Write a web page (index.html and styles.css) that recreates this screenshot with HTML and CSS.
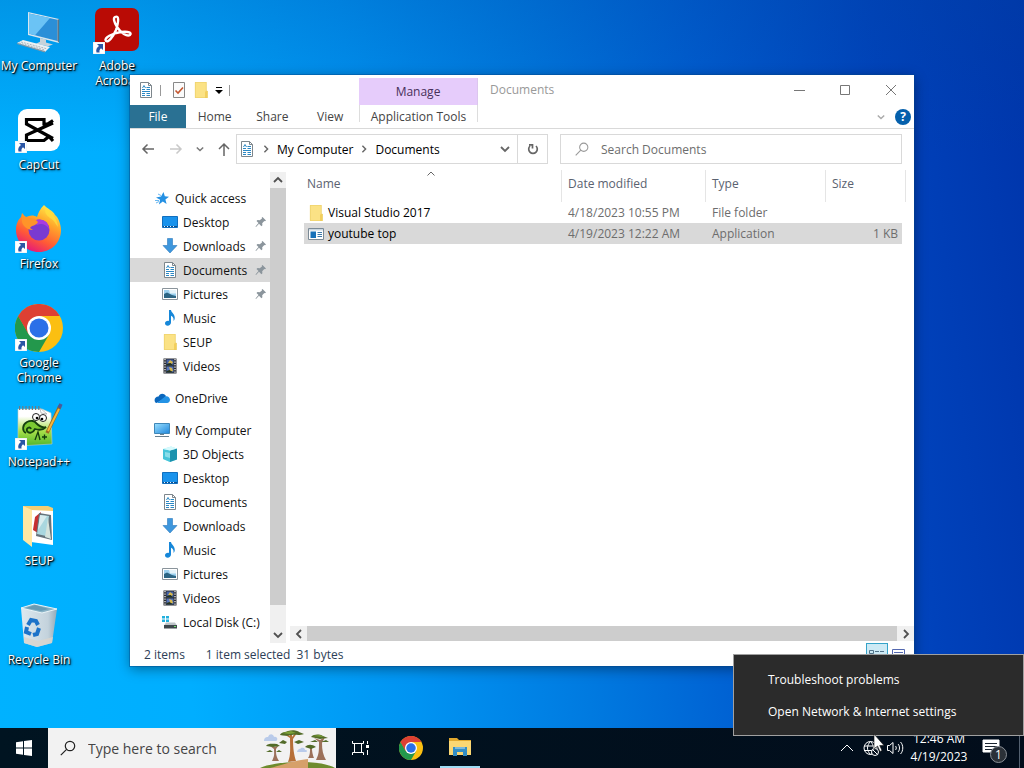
FILE: index.html
```html
<!DOCTYPE html>
<html lang="en">
<head>
    <meta charset="UTF-8">
    <meta name="viewport" content="width=device-width, initial-scale=1.0">
    <title>Documents</title>
    <link rel="stylesheet" href="styles.css">
</head>
<body>
    <!-- shared icons -->
    <svg class="sprite" aria-hidden="true">
        <defs>
            <linearGradient id="screenGrad" x1="0" y1="0" x2="1" y2="1">
                <stop offset="0" stop-color="#9be0ff"/>
                <stop offset="1" stop-color="#1e86dc"/>
            </linearGradient>
            <linearGradient id="foxGrad" x1="0.8" y1="0" x2="0.3" y2="1">
                <stop offset="0" stop-color="#fff44f"/>
                <stop offset="0.35" stop-color="#ffa72a"/>
                <stop offset="0.7" stop-color="#ff5a36"/>
                <stop offset="1" stop-color="#e3147f"/>
            </linearGradient>
            <linearGradient id="noteGrad" x1="0" y1="0" x2="0" y2="1">
                <stop offset="0.2" stop-color="#ffffff"/>
                <stop offset="0.6" stop-color="#a7e04a"/>
                <stop offset="1" stop-color="#4fb52c"/>
            </linearGradient>
            <linearGradient id="binGrad" x1="0" y1="0" x2="1" y2="0">
                <stop offset="0" stop-color="#dfe9ef"/>
                <stop offset="0.75" stop-color="#c3d2dc"/>
                <stop offset="1" stop-color="#93aab8"/>
            </linearGradient>
        </defs>
        <symbol id="i-shortcut" viewBox="0 0 12 12">
            <path fill="#fff" stroke="#c8d4e0" stroke-width="0.5" d="M0 0h12v12H0z"/>
            <path fill="#2a56a5" d="M4 2h6v6L8 6.300C6.500 7.500 6.200 9 6.600 10.500H3.500C2.600 7.800 3.800 5.300 6 4z"/>
        </symbol>
        <symbol id="i-chrome" viewBox="0 0 48 48">
            <circle cx="24" cy="24" r="24" fill="#fbbf12"/>
            <path fill="#dd4033" d="M3.200 12A24 24 0 0 1 44.800 12H24L13.600 30z"/>
            <path fill="#23984c" d="M3.200 12A24 24 0 0 0 24 48L34.400 30 24 36 13.600 30z"/>
            <path fill="#dd4033" d="M3.200 12L13.600 30 24 12z"/>
            <circle cx="24" cy="24" r="12" fill="#fff"/>
            <circle cx="24" cy="24" r="9.500" fill="#2b70e8"/>
        </symbol>
        <symbol id="i-doc" viewBox="0 0 16 16">
            <path fill="#fff" stroke="#7d868c" d="M2.500.5h8l3 3v12h-11z"/>
            <path fill="none" stroke="#7d868c" d="M10.500.5v3h3"/>
            <path stroke="#2b88c4" d="M4 7.500h3M8.500 5.500H12M8.500 7.500H12M4 9.500h8M4 11.500h3M8.500 11.500H12M4 13.500h3M8.500 13.500H12"/>
            <path stroke="#2b88c4" fill="none" d="M4.500 6L6 3.500 7.500 6"/>
        </symbol>
        <symbol id="i-folder" viewBox="0 0 16 16">
            <path fill="#fbe285" d="M2 0h9.500v9h3V16H2z"/>
            <path fill="#fbe285" d="M11 0h2.500v10H11z"/>
            <path fill="#f3cf5c" d="M12 9.500L14.500 9v7H12z"/>
            <path fill="none" stroke="#e8c95f" stroke-width="0.6" d="M2.300.3h11V9h1v6.700H2.300z"/>
        </symbol>
        <symbol id="i-star" viewBox="0 0 16 16">
            <path fill="#2490e3" d="M9.500 2l1.300 4.300 4.200.4-3.600 2.700 1.200 4.600-3.800-2.400-3.900 2.800 1.200-4.600L2 7.500l5-1z"/>
            <path stroke="#6ab8f1" d="M1 10.500h4M2 13l3-1.500M4 4l3 1.500"/>
        </symbol>
        <symbol id="i-desktop" viewBox="0 0 16 16">
            <path fill="#1a93ec" stroke="#116fbf" d="M.5 2.500h15v11H.5z"/>
            <path stroke="#0c4f8f" d="M1 12.500h14"/>
            <path stroke="#e8f5ff" stroke-dasharray="1 2" d="M2 12.500h12"/>
        </symbol>
        <symbol id="i-down" viewBox="0 0 16 16">
            <path fill="#3e97dd" stroke="#2a79be" stroke-width="0.6" d="M5.500.5h5v7H15L8 15 1 7.500h4.500z"/>
        </symbol>
        <symbol id="i-picture" viewBox="0 0 16 16">
            <path fill="#fff" stroke="#8a949b" d="M.5 2.500h15v11H.5z"/>
            <path fill="#9bd0ef" d="M2 4h12v8H2z"/>
            <path fill="#e4f3fa" d="M7 4h7v3.500H8z"/>
            <path fill="#2c6584" d="M2 12V8l3-1.500 5 2.500 4 1v2z"/>
        </symbol>
        <symbol id="i-music" viewBox="0 0 16 16">
            <path fill="#1687d9" d="M7 0h2c.3 3 4.500 4 3.700 9-.4 1-.8 1.500-1.200 1.900C12 7.500 10.500 6.500 9 5.700V12.500c0 2-1.600 3.200-3.300 3.200S3 14.700 3 13.300c0-1.700 1.900-2.900 4-2.400z"/>
        </symbol>
        <symbol id="i-video" viewBox="0 0 16 16">
            <path fill="#2b2d33" d="M1.500 0.500h13v15h-13z"/>
            <path stroke="#fff" stroke-width="1.200" stroke-dasharray="1.200 1.300" d="M3 1v14M13 1v14"/>
            <path fill="#4563a8" d="M4.500 1.500h7v6h-7z"/>
            <path fill="#5574ba" d="M4.500 8.500h7v6h-7z"/>
            <path fill="#d7b84e" d="M8 2l3 2-1 2-4-1zM7 9l3 1 1 3-4 1-1-1 2-1z"/>
            <path fill="#243322" d="M4.500 6l4-1 3 2.500h-7zM4.500 13l3-1 4 2.500h-7z"/>
        </symbol>
        <symbol id="i-cloud" viewBox="0 0 16 16">
            <path fill="#0b67bd" d="M4.500 6.500C5.500 3.500 9.500 2.200 12 6c-1 3-6 5-9.500 7C-.5 12 0 6.500 4.500 6.500z"/>
            <path fill="#2493e5" d="M3 13l8.500-6.800c3-.4 4.500 1.800 4.500 3.600 0 1.700-1.200 3.200-3 3.200z"/>
        </symbol>
        <symbol id="i-pc" viewBox="0 0 16 16">
            <path fill="url(#screenGrad)" stroke="#3f87b8" d="M.5 1.500h15v10H.5z"/>
            <path stroke="#69808f" d="M1 14.500h14M6 12.500h4"/>
        </symbol>
        <symbol id="i-cube" viewBox="0 0 16 16">
            <path fill="#a5ecf4" d="M1 3l8-2.500 6 2v11L8 16l-7-3z"/>
            <path fill="#47c4d9" d="M1 3l7 1.500V16l-7-3z"/>
            <path fill="#1b92ae" d="M8 4.500l7-2v11L8 16z"/>
            <path fill="#d7fafd" d="M1 3l8-2.500 6 2-7 2z"/>
            <path fill="#8adde9" d="M3 6l5 1v5l-5-1.500z"/>
        </symbol>
        <symbol id="i-disk" viewBox="0 0 16 16">
            <path fill="#22b0dd" d="M0 2h3v2.500H0zM4 2h3v2.500H4zM0 5.500h3V8H0zM4 5.500h3V8H4z"/>
            <path fill="#bcc3c7" d="M4 8.500h9l2 3H2z"/>
            <path fill="#3f474c" d="M2 11h13v3.500H2z"/>
            <path fill="#6fe36d" d="M12 12h2v1h-2z"/>
        </symbol>
        <symbol id="i-app" viewBox="0 0 16 16">
            <path fill="#fff" stroke="#7b8a96" d="M.5 2.500h15v11H.5z"/>
            <path fill="#c9d6e0" d="M1 3h14v1.500H1z"/>
            <path fill="#1670b8" d="M2.500 5.500H8V12H2.500z"/>
            <path stroke="#3c78a8" d="M9.500 6.500H14M9.500 8.500H14M9.500 10.500H14"/>
        </symbol>
        <symbol id="i-pin" viewBox="0 0 12 12">
            <path fill="#8b959c" d="M7.500 1L11 4.500l-1 .8-.7-.2L7.200 7.200l.2 2-1 1L4 7.800 1 11l-.5-.5L3.500 7 1.500 5l1-1 2.200.3L7 2.500 6.700 1.800z"/>
        </symbol>
        <symbol id="i-search" viewBox="0 0 16 16">
            <circle cx="10" cy="6" r="4.700" fill="none" stroke="currentColor" stroke-width="1.200"/>
            <path stroke="currentColor" stroke-width="1.200" d="M6.600 9.400L.8 15.200"/>
        </symbol>
        <symbol id="i-chev" viewBox="0 0 10 10">
            <path fill="none" stroke="currentColor" stroke-width="1.800" d="M1 3l4 4 4-4"/>
        </symbol>
    </svg>

    <main class="desktop">
        <div class="shortcuts">
            <a class="shortcut" href="#">
                <svg viewBox="0 0 48 48">
                    <path fill="#d8e6ef" d="M13 5l31 7v24l-31-8z"/>
                    <path fill="#2b8fd8" d="M14 6.500l28.500 6.300V34L14 26.800z"/>
                    <path fill="#6bc3f5" d="M14 6.500l21 4.600L20 28.300l-6-1.500z"/>
                    <path fill="#5b7488" d="M42.500 12.800l1.700-.7V36l-1.700-2z"/>
                    <path fill="#c8d3da" d="M25 31l6 1.500v3l7 2-5 1.800-12-2.500 4-2z"/>
                    <path fill="#eef1f3" d="M8 33l27 7-5 5L2 36z"/>
                    <path stroke="#a9b7c0" fill="none" stroke-dasharray="2 1" d="M6 35l26 6.800M4 36l26 7"/>
                    <path fill="#8497a3" d="M2 36l28 8v1.600L2 37z"/>
                </svg>
                <span>My Computer</span>
            </a>
            <a class="shortcut" href="#">
                <svg viewBox="0 0 48 48">
                    <rect x="3" y="3" width="42" height="42" rx="9" fill="#fff"/>
                    <path fill="none" stroke="#000" stroke-width="3.200" d="M38 14.500L32.500 18H29V13.500H11.500V18l26.500 14.500M38 17L11.500 29V34.500H29l5-4 4 4.500M29 14v3"/>
                    <use href="#i-shortcut" x="0" y="35" width="12" height="12"/>
                </svg>
                <span>CapCut</span>
            </a>
            <a class="shortcut" href="#">
                <svg viewBox="0 0 48 48">
                    <path fill="url(#foxGrad)" d="M29 0c3 4 9 5 11 10 3 2 6 9 6 15 0 12-9 22-22 22S1 37 1 25c0-6 2-10 5-13l1-4c2 2 2 3 4 4 4-2 8-2 11 0 2-6 4-9 7-12z"/>
                    <circle cx="24" cy="25" r="10.500" fill="#7a3ad1"/>
                    <path fill="#a83ce0" d="M18 16c8-4 16 0 16 8-3-5-8-6-12-4z"/>
                    <path fill="#ff9429" d="M7 9c5 5 9 4 13 5l3 3c-2 4-6 3-8 6l3 2c-6 0-10-4-11-8z"/>
                    <path fill="#ffe13e" fill-opacity=".7" d="M31 3c5 5 11 9 12 19-3-4-4-7-8-9-4-3-6-6-4-10z"/>
                    <use href="#i-shortcut" x="0" y="36" width="12" height="12"/>
                </svg>
                <span>Firefox</span>
            </a>
            <a class="shortcut" href="#">
                <svg viewBox="0 0 48 48">
                    <use href="#i-chrome" width="48" height="48"/>
                    <use href="#i-shortcut" x="0" y="35" width="12" height="12"/>
                </svg>
                <span>Google Chrome</span>
            </a>
            <a class="shortcut" href="#">
                <svg viewBox="0 0 48 48">
                    <path fill="url(#noteGrad)" stroke="#c2ccbd" stroke-width="0.6" d="M3 6h24l9 4 1 31-34 2z"/>
                    <path stroke="#6d7b85" stroke-width="4" stroke-dasharray="1.200 2" d="M4 5h21"/>
                    <path fill="#fff" stroke="#999" stroke-width="0.600" d="M25 5l1 5 6 1z"/>
                    <path fill="#7bcb32" stroke="#15400e" stroke-width="1.800" d="M11 30c-4-2-4-8 1-11 4-2 8-1 9 1 3 3 7 5 10 4-4 4-8 3-11 2-2 4-6 5-8 2-1-3 3-5 4-2"/>
                    <circle cx="21" cy="14" r="3.500" fill="#fff" stroke="#222"/>
                    <circle cx="28" cy="15" r="3.500" fill="#fff" stroke="#222"/>
                    <circle cx="22" cy="15" r="1.300"/>
                    <circle cx="27" cy="16" r="1.300"/>
                    <path fill="none" stroke="#123c0d" stroke-width="1.300" d="M20 37l3-8 2 8m2-3h5m-2.500-2.500v5"/>
                    <path stroke="#9b6a21" stroke-width="3.500" d="M45 3L32 30"/>
                    <path stroke="#f6b63c" stroke-width="2" d="M44 6L33 28"/>
                    <path stroke="#485a9b" stroke-width="3.500" d="M46 1l-2 4"/>
                    <use href="#i-shortcut" x="0" y="35" width="12" height="12"/>
                </svg>
                <span>Notepad++</span>
            </a>
            <a class="shortcut" href="#">
                <svg viewBox="0 0 48 48">
                    <path fill="#f5cd72" d="M8 4h25l5 2v36L16 38z"/>
                    <path fill="#fff" d="M16 8l22 1v34l-22-3z"/>
                    <path fill="#c62f30" d="M20 15l6-5-3 21-5-3z"/>
                    <path fill="#65737b" d="M24 11l12 2 1 25-16-4z"/>
                    <path fill="#a9d7df" d="M25 13l9 1-3 20-9-2z"/>
                    <path fill="#d8ecee" d="M25 13l7 1-9 14z"/>
                    <path fill="#d4e3dc" d="M33 16l3 21-6-2z"/>
                    <path fill="#ffe7a3" d="M8 4l9 4v37l-9-7z"/>
                </svg>
                <span>SEUP</span>
            </a>
            <a class="shortcut" href="#">
                <svg viewBox="0 0 48 48">
                    <path fill="url(#binGrad)" d="M6 7l36 1-5 34-15 4-13-4z"/>
                    <path fill="#d9d4cd" fill-opacity=".8" d="M9 36l14 4 15-4-1 6-15 4-13-4z"/>
                    <path fill="#8ab3c6" stroke="#eaf4f8" d="M6 7l13-4 23 5-15 4z"/>
                    <path fill="#689bb4" d="M11 7l9-3 14 4-8 2z"/>
                    <path fill="none" stroke="#1d73c9" stroke-width="4" d="M13 24l3-5 5 1 2 4M24 27l-2 6-4 1M16 33l-5-2 1-5"/>
                </svg>
                <span>Recycle Bin</span>
            </a>
            <a class="shortcut" href="#">
                <svg viewBox="0 0 48 48">
                    <rect x="2" y="1" width="44" height="43" rx="7" fill="#b90b05"/>
                    <path fill="none" stroke="#fff" stroke-width="2.400" d="M22 10c4-2 4 4 1 13-3 7-8 13-10 11-3-3 7-8 15-9 8-1 11 1 9 3-3 2-9-2-13-8-3-5-4-9-2-10z"/>
                    <use href="#i-shortcut" x="0" y="35" width="12" height="12"/>
                </svg>
                <span>Adobe Acrobat</span>
            </a>
        </div>

        <section class="window">
            <header class="window-head">
                <div class="quick-tools">
                    <svg class="icon"><use href="#i-doc"/></svg>
                    <i></i>
                    <button aria-label="Properties">
                        <svg class="icon" viewBox="0 0 16 16">
                            <path fill="#fbfbfb" stroke="#888" d="M2.500.5h11v15h-11z"/>
                            <path fill="none" stroke="#c4562f" stroke-width="1.600" d="M4.500 8.500L7 11l5-5.500"/>
                        </svg>
                    </button>
                    <button aria-label="New folder"><svg class="icon"><use href="#i-folder"/></svg></button>
                    <button aria-label="Customize toolbar">
                        <svg class="tiny" viewBox="0 0 8 8"><path d="M1 1h6v1H1zM0 4h8L4 8z"/></svg>
                    </button>
                    <i></i>
                </div>
                <button class="manage">Manage</button>
                <div class="caption">
                    <h1>Documents</h1>
                    <button aria-label="Minimize"><svg viewBox="0 0 12 12"><path d="M1 6.500h11"/></svg></button>
                    <button aria-label="Maximize"><svg viewBox="0 0 12 12"><path d="M1.500 1.500h9v9h-9z"/></svg></button>
                    <button aria-label="Close"><svg viewBox="0 0 12 12"><path d="M1 1l10 10M11 1L1 11"/></svg></button>
                </div>
                <nav class="tabs">
                    <button class="file">File</button>
                    <button>Home</button>
                    <button>Share</button>
                    <button>View</button>
                </nav>
                <button class="tools-tab">Application Tools</button>
                <div class="ribbon-end">
                    <button aria-label="Expand ribbon"><svg class="tiny"><use href="#i-chev"/></svg></button>
                    <button class="help" aria-label="Help">?</button>
                </div>
            </header>

            <div class="address-row">
                <div class="history">
                    <button aria-label="Back"><svg class="icon" viewBox="0 0 16 16"><path d="M14 8H3M7.500 3.500L3 8l4.500 4.500"/></svg></button>
                    <button class="off" aria-label="Forward"><svg class="icon" viewBox="0 0 16 16"><path d="M2 8h11M8.500 3.500L13 8l-4.500 4.500"/></svg></button>
                    <button class="recent" aria-label="Recent locations"><svg class="tiny"><use href="#i-chev"/></svg></button>
                    <button aria-label="Up"><svg class="icon" viewBox="0 0 16 16"><path d="M8 15V3M3 8l5-5 5 5"/></svg></button>
                </div>
                <div class="address">
                    <svg class="icon"><use href="#i-doc"/></svg>
                    <svg class="tiny right"><use href="#i-chev"/></svg>
                    <a href="#">My Computer</a>
                    <svg class="tiny right"><use href="#i-chev"/></svg>
                    <a href="#">Documents</a>
                    <button class="drop" aria-label="Previous locations"><svg class="chev"><use href="#i-chev"/></svg></button>
                    <button class="refresh" aria-label="Refresh">
                        <svg viewBox="0 0 14 14"><path fill="none" stroke="#666" stroke-width="1.700" d="M10 4a4.300 4.300 0 1 1-6 0M3 2.800h3.500V6.500"/></svg>
                    </button>
                </div>
                <label class="search">
                    <svg><use href="#i-search"/></svg>
                    <input type="text" placeholder="Search Documents" aria-label="Search Documents">
                </label>
            </div>

            <div class="content">
                <aside class="sidebar">
                    <ul class="tree">
                        <li class="root"><a href="#"><svg class="icon"><use href="#i-star"/></svg>Quick access</a></li>
                        <li><a href="#"><svg class="icon"><use href="#i-desktop"/></svg>Desktop<svg class="pin"><use href="#i-pin"/></svg></a></li>
                        <li><a href="#"><svg class="icon"><use href="#i-down"/></svg>Downloads<svg class="pin"><use href="#i-pin"/></svg></a></li>
                        <li><a class="active" href="#"><svg class="icon"><use href="#i-doc"/></svg>Documents<svg class="pin"><use href="#i-pin"/></svg></a></li>
                        <li><a href="#"><svg class="icon"><use href="#i-picture"/></svg>Pictures<svg class="pin"><use href="#i-pin"/></svg></a></li>
                        <li><a href="#"><svg class="icon"><use href="#i-music"/></svg>Music</a></li>
                        <li><a href="#"><svg class="icon"><use href="#i-folder"/></svg>SEUP</a></li>
                        <li><a href="#"><svg class="icon"><use href="#i-video"/></svg>Videos</a></li>
                        <li class="root"><a href="#"><svg class="icon"><use href="#i-cloud"/></svg>OneDrive</a></li>
                        <li class="root"><a href="#"><svg class="icon"><use href="#i-pc"/></svg>My Computer</a></li>
                        <li><a href="#"><svg class="icon"><use href="#i-cube"/></svg>3D Objects</a></li>
                        <li><a href="#"><svg class="icon"><use href="#i-desktop"/></svg>Desktop</a></li>
                        <li><a href="#"><svg class="icon"><use href="#i-doc"/></svg>Documents</a></li>
                        <li><a href="#"><svg class="icon"><use href="#i-down"/></svg>Downloads</a></li>
                        <li><a href="#"><svg class="icon"><use href="#i-music"/></svg>Music</a></li>
                        <li><a href="#"><svg class="icon"><use href="#i-picture"/></svg>Pictures</a></li>
                        <li><a href="#"><svg class="icon"><use href="#i-video"/></svg>Videos</a></li>
                        <li><a href="#"><svg class="icon"><use href="#i-disk"/></svg>Local Disk (C:)</a></li>
                    </ul>
                    <div class="scroll vertical">
                        <button aria-label="Scroll up"><svg class="chev up"><use href="#i-chev"/></svg></button>
                        <div class="track"><div class="thumb"></div></div>
                        <button aria-label="Scroll down"><svg class="chev"><use href="#i-chev"/></svg></button>
                    </div>
                </aside>

                <div class="files">
                    <div class="list">
                        <table>
                            <thead>
                                <tr>
                                    <th class="name">Name<svg class="sort" viewBox="0 0 8 5"><path d="M.5 4.500L4 1l3.500 3.500"/></svg></th>
                                    <th class="date">Date modified</th>
                                    <th class="type">Type</th>
                                    <th class="size">Size</th>
                                    <td class="end"></td>
                                </tr>
                            </thead>
                            <tbody>
                                <tr>
                                    <td class="name"><svg class="icon"><use href="#i-folder"/></svg>Visual Studio 2017</td>
                                    <td>4/18/2023 10:55 PM</td>
                                    <td>File folder</td>
                                    <td class="size"></td>
                                </tr>
                                <tr class="selected">
                                    <td class="name"><svg class="icon"><use href="#i-app"/></svg>youtube top</td>
                                    <td>4/19/2023 12:22 AM</td>
                                    <td>Application</td>
                                    <td class="size">1 KB</td>
                                </tr>
                            </tbody>
                        </table>
                    </div>
                    <div class="scroll horizontal">
                        <button aria-label="Scroll left"><svg class="chev left"><use href="#i-chev"/></svg></button>
                        <div class="track"><div class="thumb"></div></div>
                        <button aria-label="Scroll right"><svg class="chev right"><use href="#i-chev"/></svg></button>
                    </div>
                </div>
            </div>

            <footer class="status">
                <span class="count">2 items</span>
                <span>1 item selected</span>
                <span>31 bytes</span>
                <button class="view on" aria-label="Details view">
                    <svg viewBox="0 0 18 12"><path fill="none" stroke="#52748b" d="M1.500 2.500h4v3h-4zM7 3.500h4M12 3.500h4M1.500 7.500h4v3h-4zM7 8.500h4M12 8.500h4"/></svg>
                </button>
                <button class="view" aria-label="Large icons view">
                    <svg viewBox="0 0 18 12"><path fill="#fff" stroke="#5368b0" d="M2.500 1.500h12v9h-12z"/><path stroke="#5368b0" d="M4 4.500h9"/></svg>
                </button>
            </footer>
        </section>
    </main>

    <footer class="taskbar">
        <button class="start" aria-label="Start">
            <svg class="icon" viewBox="0 0 16 16"><path fill="#fff" d="M0 2.200l7-1v6.300H0zM8 1l8-1v7.500H8zM0 8.500h7v6.300l-7-1zM8 8.500h8V16l-8-1z"/></svg>
        </button>
        <label class="task-search">
            <svg class="glass"><use href="#i-search"/></svg>
            <input type="text" placeholder="Type here to search" aria-label="Type here to search">
            <svg class="trees" viewBox="0 0 76 40">
                <path fill="#b9cbea" d="M4 13c0-4 3-4 4-4 2-5 6-2 6 0 4-1 4 4 2 4zM37 24c1-4 3-2 4-4 3-1 4 1 4 2 3 0 2 2 1 2z"/>
                <path fill="#6e8b2d" d="M0 40c14-7 60-9 75 0z"/>
                <path fill="#d6a06a" d="M10 40c16-4 22-7 38-9v9z"/>
                <path fill="#b66f38" d="M28 34c3-7 2-14 2-24l-6-4 1-1 5 3V3h2v6l4-5 1 1-4 6c0 10 1 16 3 22z"/>
                <path fill="#9c7059" d="M12 33c3-6 2-7 2-12l-4-3 5 1 4-2-3 4c0 5 0 7 3 12zM48 30c2-3 2-5 2-10h2c0 5 1 7 2 10zM56 32c3-6 3-9 3-18l-5-4 6 2 5-3-3 6c0 7 1 12 4 17z"/>
                <path fill="#526b28" d="M20 7c1-3 6-3 8-4 5-2 11 0 11 1l5 2c-6 2-9 0-12 1-5 1-8 1-12 0zM19 15l4-3 4 2-2 2zM34 14l5-2 5 2-6 2zM6 18c2-3 7-2 11-2l3 2-7 1zM6 24l4-2 3 2zM16 24l3-2 3 2zM45 19c3-3 7-3 11 0l-5 2zM51 9c3-3 8-3 12-1l5 2-8 1zM50 14l5-2 3 2zM61 14l5-2 3 2z"/>
                <path fill="#7ca138" d="M22 5l9-2 5 2-7 1zM52 8l8-1 4 2z"/>
            </svg>
        </label>
        <button class="task" aria-label="Task view">
            <svg viewBox="0 0 18 16"><path fill="none" stroke="#fff" d="M1.500 1v2.500h11V1M1.500 15v-2.500h11V15M3.500 3.500v9M10.500 3.500v9M16.500 1v3M16.500 10v5"/><path fill="#fff" d="M15 5h3v3h-3z"/></svg>
        </button>
        <button class="task chrome" aria-label="Google Chrome"><svg class="app"><use href="#i-chrome"/></svg></button>
        <button class="task running" aria-label="File Explorer">
            <svg class="app" viewBox="0 0 24 24">
                <path fill="#e2a92e" d="M1 3h8l2 2h12v5H1z"/>
                <path fill="#fbd773" d="M1 6h22v14H1z"/>
                <path fill="#338ec5" d="M5 12h14v9h-4v-4H9v4H5z"/>
                <path fill="#7cb9dc" d="M7 12h10v2H7z"/>
            </svg>
        </button>
        <div class="tray">
            <button aria-label="Hidden icons"><svg viewBox="0 0 16 16"><path d="M2 11l6-6 6 6"/></svg></button>
            <button aria-label="Network">
                <svg viewBox="0 0 16 16"><circle cx="7.500" cy="8" r="6.500"/><path d="M1 6h13M1 10.500h13M7.500 1.500c-4 4-4 9 0 13M7.500 1.500c4 4 4 9 0 13"/><circle cx="12" cy="12" r="3.500" fill="#020d1b"/><path d="M9.500 9.500l5 5"/></svg>
            </button>
            <button aria-label="Volume">
                <svg viewBox="0 0 18 16"><path d="M1.500 5.500h2L7 2.500v11L3.500 10.500h-2zM9.500 6c1 1 1 3 0 4M12 4c2 2 2 6 0 8M14.500 2c3 3 3 9 0 12"/></svg>
            </button>
            <time class="clock">12:46 AM<br>4/19/2023</time>
            <button class="notice" aria-label="Notifications">
                <svg viewBox="0 0 18 18"><path class="solid" d="M1 1h16v12h-4v4l-4-4H1z"/><path class="lines" d="M3 4.500h12M3 7.500h12M3 10.500h8"/></svg>
                <span class="badge">1</span>
            </button>
        </div>
    </footer>

    <div class="menu" role="menu">
        <button role="menuitem">Troubleshoot problems</button>
        <button role="menuitem">Open Network &amp; Internet settings</button>
    </div>
    <svg class="cursor" viewBox="0 0 12 18"><path fill="#fff" stroke="#111" stroke-width="0.600" d="M1 0v15l3.500-3 2.500 5.500 2-1-2.300-5H11z"/></svg>
</body>
</html>
```
FILE: styles.css
```css
* {
    box-sizing: border-box;
}
body {
    margin: 0;
    min-height: 100vh;
    display: flex;
    flex-direction: column;
    position: relative;
    overflow: hidden;
    font-family: "Open Sans", "Noto Sans", sans-serif;
    font-size: 12px;
    color: #111;
    background:
        linear-gradient(180deg, rgba(0, 70, 160, 0.25), rgba(0, 70, 160, 0) 20%),
        linear-gradient(84deg, #00b2ff 0%, #00aeff 18%, #0094f2 38%, #007ae0 54%, #005cd0 70%, #0042bb 86%, #0035ab 100%);
}
button {
    margin: 0;
    padding: 0;
    border: 0;
    background: none;
    font: inherit;
    color: inherit;
    display: flex;
    align-items: center;
    justify-content: center;
}
input {
    border: 0;
    padding: 0;
    outline: 0;
    background: none;
    font: inherit;
    min-width: 0;
    flex: 1;
}
a {
    color: inherit;
    text-decoration: none;
}
svg {
    flex: none;
}
.sprite {
    position: absolute;
    width: 0;
    height: 0;
}
.icon {
    width: 16px;
    height: 16px;
}
.tiny {
    width: 8px;
    height: 8px;
}
.chev {
    width: 10px;
    height: 10px;
}
.up {
    transform: rotate(180deg);
}
.left {
    transform: rotate(90deg);
}
.right {
    transform: rotate(-90deg);
}

/* desktop */
.desktop {
    flex: 1;
    position: relative;
}
.shortcuts {
    display: grid;
    grid-auto-flow: column;
    grid-template-rows: repeat(7, 99px);
    grid-auto-columns: 78px;
    justify-content: start;
}
.shortcut {
    display: flex;
    flex-direction: column;
    align-items: center;
    gap: 3px;
    padding-top: 7px;
    color: #fff;
    line-height: 15px;
    text-align: center;
    text-shadow: 1px 1px 1px #000, 1px 1px 3px #000;
}
.shortcut svg {
    width: 48px;
    height: 48px;
}

/* explorer window */
.window {
    position: absolute;
    top: 75px;
    right: 110px;
    bottom: 62px;
    left: 130px;
    display: flex;
    flex-direction: column;
    background: #fff;
    box-shadow: 0 0 0 1px rgba(0, 70, 140, 0.4), 0 3px 12px rgba(0, 0, 0, 0.4);
}
.window-head {
    display: grid;
    grid-template-columns: 229px 119px 1fr;
    grid-template-rows: 30px 23px;
    border-bottom: 1px solid #d9d9d9;
}
.quick-tools {
    display: flex;
    align-items: center;
    gap: 6px;
    padding-left: 8px;
}
.quick-tools i {
    width: 1px;
    height: 11px;
    background: #999;
}
.quick-tools i:first-of-type {
    margin-right: 4px;
}
.manage {
    margin-top: 3px;
    background: #e6ccfb;
    color: #46305a;
    border-right: 1px solid #dcc6ee;
}
.caption {
    display: flex;
    padding-left: 12px;
}
.caption h1 {
    flex: 1;
    margin: 0;
    font-size: 12px;
    font-weight: normal;
    line-height: 30px;
    color: #999;
}
.caption button {
    width: 46px;
}
.caption svg {
    width: 12px;
    height: 12px;
    fill: none;
    stroke: #777;
}
.tabs {
    display: flex;
    color: #444;
}
.tabs button {
    width: 58px;
}
.tabs .file {
    width: 56px;
    background: #2a7193;
    color: #fff;
}
.tools-tab {
    color: #444;
    margin-bottom: 6px;
    padding-top: 6px;
    border: solid #ddd;
    border-width: 0 1px;
}
.ribbon-end {
    display: flex;
    align-items: center;
    justify-content: flex-end;
    gap: 10px;
    padding-right: 3px;
    color: #aaa;
}
.help {
    width: 16px;
    height: 16px;
    border-radius: 50%;
    background: #0560ac;
    color: #fff;
    font-weight: bold;
}

/* address row */
.address-row {
    display: flex;
    gap: 12px;
    padding: 5px 12px 6px 10px;
}
.history {
    display: flex;
    align-items: center;
    gap: 12px;
    width: 84px;
}
.history path {
    fill: none;
    stroke: #666;
    stroke-width: 1.5;
}
.history .off {
    opacity: 0.35;
}
.history .recent {
    width: 8px;
    color: #777;
}
.address {
    display: flex;
    align-items: center;
    flex: 308;
    height: 30px;
    border: 1px solid #d9d9d9;
    padding-left: 2px;
    gap: 7px;
    color: #000;
}
.address > svg, .address .drop {
    color: #666;
}
.address .drop {
    margin-left: auto;
}
.refresh {
    width: 30px;
    height: 28px;
    border-left: 1px solid #d9d9d9;
}
.refresh svg {
    width: 14px;
    height: 14px;
}
.search {
    display: flex;
    align-items: center;
    gap: 12px;
    flex: 312;
    height: 30px;
    border: 1px solid #d9d9d9;
    padding: 0 14px;
}
.search svg {
    width: 14px;
    height: 14px;
    color: #999;
}
.search input::placeholder {
    color: #6d6d6d;
    opacity: 1;
}

/* sidebar */
.content {
    flex: 1;
    display: flex;
    min-height: 0;
}
.sidebar {
    display: flex;
    width: 156px;
}
.tree {
    flex: 1;
    margin: 0;
    padding: 16px 0 0;
    list-style: none;
}
.tree a {
    display: flex;
    align-items: center;
    gap: 5px;
    height: 24px;
    padding: 0 3px 0 32px;
    white-space: nowrap;
}
.tree .root a {
    padding-left: 24px;
}
.tree .root + .root, .tree li:not(.root) + .root {
    margin-top: 8px;
}
.tree .active {
    background: #d9d9d9;
}
.pin {
    width: 12px;
    height: 12px;
    margin-left: auto;
}
.scroll {
    display: flex;
    background: #f0f0f0;
    color: #505050;
}
.scroll .track {
    flex: 1;
}
.scroll .thumb {
    background: #cdcdcd;
}
.vertical {
    flex-direction: column;
    width: 16px;
    margin-top: 2px;
}
.vertical button {
    height: 16px;
}
.vertical .thumb {
    height: 95%;
}
.horizontal {
    height: 15px;
    margin: 0 0 2px 4px;
}
.horizontal button {
    width: 17px;
}
.horizontal .thumb {
    height: 100%;
}

/* file list */
.files {
    flex: 1;
    display: flex;
    flex-direction: column;
    min-width: 0;
}
.list {
    flex: 1;
    padding: 0 8px 0 18px;
}
table {
    width: 100%;
    table-layout: fixed;
    border-collapse: separate;
    border-spacing: 0;
    color: #6d6d6d;
}
th {
    position: relative;
    height: 32px;
    padding: 0 6px 6px;
    font-weight: normal;
    text-align: left;
    color: #5a6270;
    border-right: 1px solid #e5e5e5;
}
th.name {
    width: 258px;
    padding-left: 3px;
}
.date {
    width: 144px;
}
.type {
    width: 120px;
}
th.size {
    border-right: 0;
}
.end {
    width: 4px;
    padding: 0;
    border-right: 1px solid #e5e5e5;
}
.sort {
    position: absolute;
    top: 1px;
    left: 48%;
    width: 8px;
    height: 5px;
    fill: none;
    stroke: #666;
}
tbody td {
    height: 21px;
    padding: 0 6px;
    white-space: nowrap;
}
td.name {
    display: flex;
    align-items: center;
    gap: 4px;
    padding-left: 4px;
    color: #000;
}
td.size {
    text-align: right;
    padding-right: 4px;
}
.selected td {
    background: #d9d9d9;
}

/* status bar */
.status {
    display: flex;
    align-items: center;
    gap: 6px;
    height: 23px;
    padding: 0 4px 1px 14px;
    color: #2c3e57;
}
.count {
    margin-right: 15px;
}
.view {
    width: 22px;
    height: 22px;
}
.view svg {
    width: 18px;
    height: 12px;
}
.view.on {
    margin-left: auto;
    background: #cdeaf5;
    border: 1px solid #35a3c9;
}
.view + .view {
    margin-left: -6px;
}

/* taskbar */
.taskbar {
    display: flex;
    height: 40px;
    background: linear-gradient(90deg, #001421, #020d1b);
    color: #fff;
}
.start {
    width: 48px;
}
.task-search {
    display: flex;
    align-items: center;
    width: 288px;
    background: #f2f2f2;
    color: #222;
    padding-left: 12px;
    font-size: 14px;
}
.task-search .glass {
    width: 16px;
    height: 16px;
    margin-right: 12px;
}
.task-search input::placeholder {
    color: #454545;
    opacity: 1;
}
.trees {
    width: 76px;
    height: 40px;
}
.task {
    width: 48px;
}
.task svg {
    width: 18px;
    height: 16px;
}
.task .app {
    width: 24px;
    height: 24px;
}
.chrome {
    width: 54px;
}
.running {
    width: 40px;
    margin-left: 2px;
    border-bottom: 2px solid #9fdcf5;
}
.tray {
    display: flex;
    align-items: center;
    margin-left: auto;
    padding-right: 4px;
}
.tray button {
    width: 24px;
    height: 40px;
}
.tray svg {
    width: 18px;
    height: 16px;
    fill: none;
    stroke: #fff;
}
.clock {
    width: 64px;
    text-align: center;
    line-height: 18px;
}
.tray .notice {
    position: relative;
    justify-content: flex-start;
    width: 49px;
    padding-left: 11px;
    border-right: 1px solid #536070;
}
.notice svg {
    height: 18px;
}
.notice .solid {
    fill: #fff;
}
.notice .lines {
    stroke: #1b2530;
}
.badge {
    position: absolute;
    right: 12px;
    bottom: 5px;
    width: 17px;
    height: 17px;
    border: 1px solid #8a9097;
    border-radius: 50%;
    background: #2b3138;
    line-height: 15px;
}

/* network context menu */
.menu {
    position: absolute;
    right: 0;
    bottom: 32px;
    width: 291px;
    padding: 8px 0;
    background: #2b2b2b;
    border: 1px solid #a0a0a0;
}
.menu button {
    width: 100%;
    height: 32px;
    padding-left: 34px;
    justify-content: flex-start;
    color: #fff;
}
.cursor {
    position: absolute;
    right: 139px;
    bottom: 16px;
    width: 12px;
    height: 18px;
}
```
